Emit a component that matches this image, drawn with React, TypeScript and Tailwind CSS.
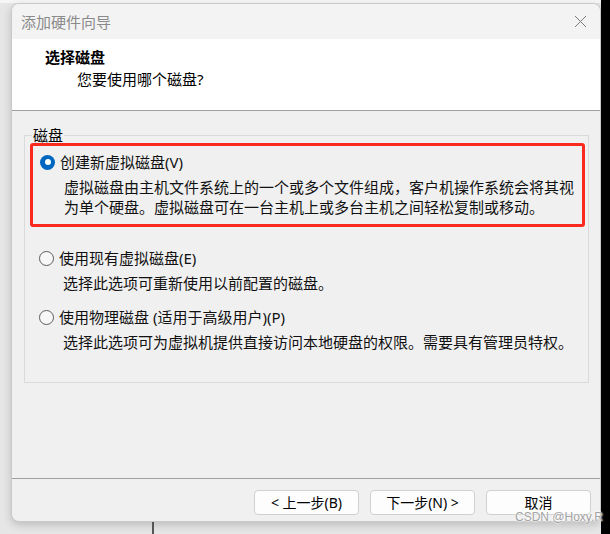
import React from "react";

function Radio({ checked }: { checked?: boolean }) {
  if (checked) {
    return (
      <span className="w-[15px] h-[15px] shrink-0 rounded-full bg-[#0067c0] flex items-center justify-center">
        <span className="w-[6px] h-[6px] rounded-full bg-white" />
      </span>
    );
  }
  return <span className="w-[15px] h-[15px] shrink-0 rounded-full border border-[#5c5c5c] bg-[#f7f7f7]" />;
}

function Option({
  checked,
  label,
  lines,
}: {
  checked?: boolean;
  label: string;
  lines: string[];
}) {
  return (
    <div>
      <div className="flex items-center h-[20px] gap-[5px]">
        <Radio checked={checked} />
        <span className="leading-[20px]">{label}</span>
      </div>
      <div className="mt-[5px] pl-[24px]">
        {lines.map((l) => (
          <div key={l} className="leading-[20px] whitespace-nowrap">
            {l}
          </div>
        ))}
      </div>
    </div>
  );
}

function Button({ children }: { children: React.ReactNode }) {
  return (
    <div className="w-[105px] h-[25px] rounded-[4px] border border-[#d0d0d0] bg-[#fdfdfd] flex items-center justify-center text-[14px] leading-[20px] text-black">
      {children}
    </div>
  );
}

export default function App() {
  return (
    <div
      className="relative w-[610px] h-[534px] flex bg-[#e6e6e6] overflow-hidden text-[15px] text-[#111]"
      style={{ fontFamily: '"Noto Sans", "Noto Sans CJK SC", sans-serif' }}
    >
      <div className="w-[601px] flex flex-col">
        <div className="h-[3px] bg-[#f6f6f6]" />
        <div className="pl-[11px]">
          <div className="w-[590px] h-[519px] flex flex-col rounded-[8px] border border-[#c9c9c9] overflow-hidden bg-[#f0f0f0] shadow-[0_3px_8px_rgba(0,0,0,0.18)]">
            {/* title bar */}
            <div className="h-[35px] shrink-0 bg-[#f3f3f3] flex items-center justify-between pl-[9px] pr-[13px]">
              <span className="text-[15px] text-[#8a8a8a] leading-[20px]">添加硬件向导</span>
              <svg width="13" height="13" viewBox="0 0 13 13" className="text-[#7a7a7a]">
                <path d="M1 1 L12 12 M12 1 L1 12" stroke="currentColor" strokeWidth="1" fill="none" />
              </svg>
            </div>
            {/* header */}
            <div className="h-[72px] shrink-0 bg-white border-b border-[#a0a0a0] pt-[7px]">
              <div className="pl-[33px] font-bold leading-[22px] text-black">选择磁盘</div>
              <div className="pl-[65px] leading-[22px] text-black">您要使用哪个磁盘?</div>
            </div>
            {/* body */}
            <div className="flex-1 pt-[16px] pl-[12px] pr-[11px]">
              <fieldset className="border border-[#dadada] pl-[5px] pr-[3px] pb-[28px] h-[256px]">
                <legend className="ml-[2px] px-[1px] leading-[16px] text-black">磁盘</legend>
                <div className="border-[3px] border-[#fa2a1e] rounded-[3px] pl-[7px] pt-[6px] pb-[7px]">
                  <Option
                    checked
                    label="创建新虚拟磁盘(V)"
                    lines={[
                      "虚拟磁盘由主机文件系统上的一个或多个文件组成，客户机操作系统会将其视",
                      "为单个硬盘。虚拟磁盘可在一台主机上或多台主机之间轻松复制或移动。",
                    ]}
                  />
                </div>
                <div className="pl-[9px] mt-[21px]">
                  <Option label="使用现有虚拟磁盘(E)" lines={["选择此选项可重新使用以前配置的磁盘。"]} />
                </div>
                <div className="pl-[9px] mt-[14px]">
                  <Option
                    label="使用物理磁盘 (适用于高级用户)(P)"
                    lines={["选择此选项可为虚拟机提供直接访问本地硬盘的权限。需要具有管理员特权。"]}
                  />
                </div>
              </fieldset>
            </div>
            {/* footer */}
            <div className="h-[43px] shrink-0 border-t border-[#a0a0a0] pt-[11px] pr-[9px] flex justify-end gap-[11px]">
              <Button>&lt; 上一步(B)</Button>
              <Button>下一步(N) &gt;</Button>
              <Button>取消</Button>
            </div>
          </div>
        </div>
        <div className="flex-1 flex">
          <div className="w-[152px]" />
          <div className="w-[2px] bg-[#555]" />
        </div>
      </div>
      <div className="flex-1 bg-black" />
      <div
        className="absolute left-[515px] top-[510px] text-[12px] leading-[14px] text-[#a3a3a3]"
        style={{ fontFamily: '"Liberation Sans", Arial, sans-serif', textShadow: "0 0 2px #fff, 0 0 2px #fff" }}
      >
        CSDN @Hoxy.R
      </div>
    </div>
  );
}
